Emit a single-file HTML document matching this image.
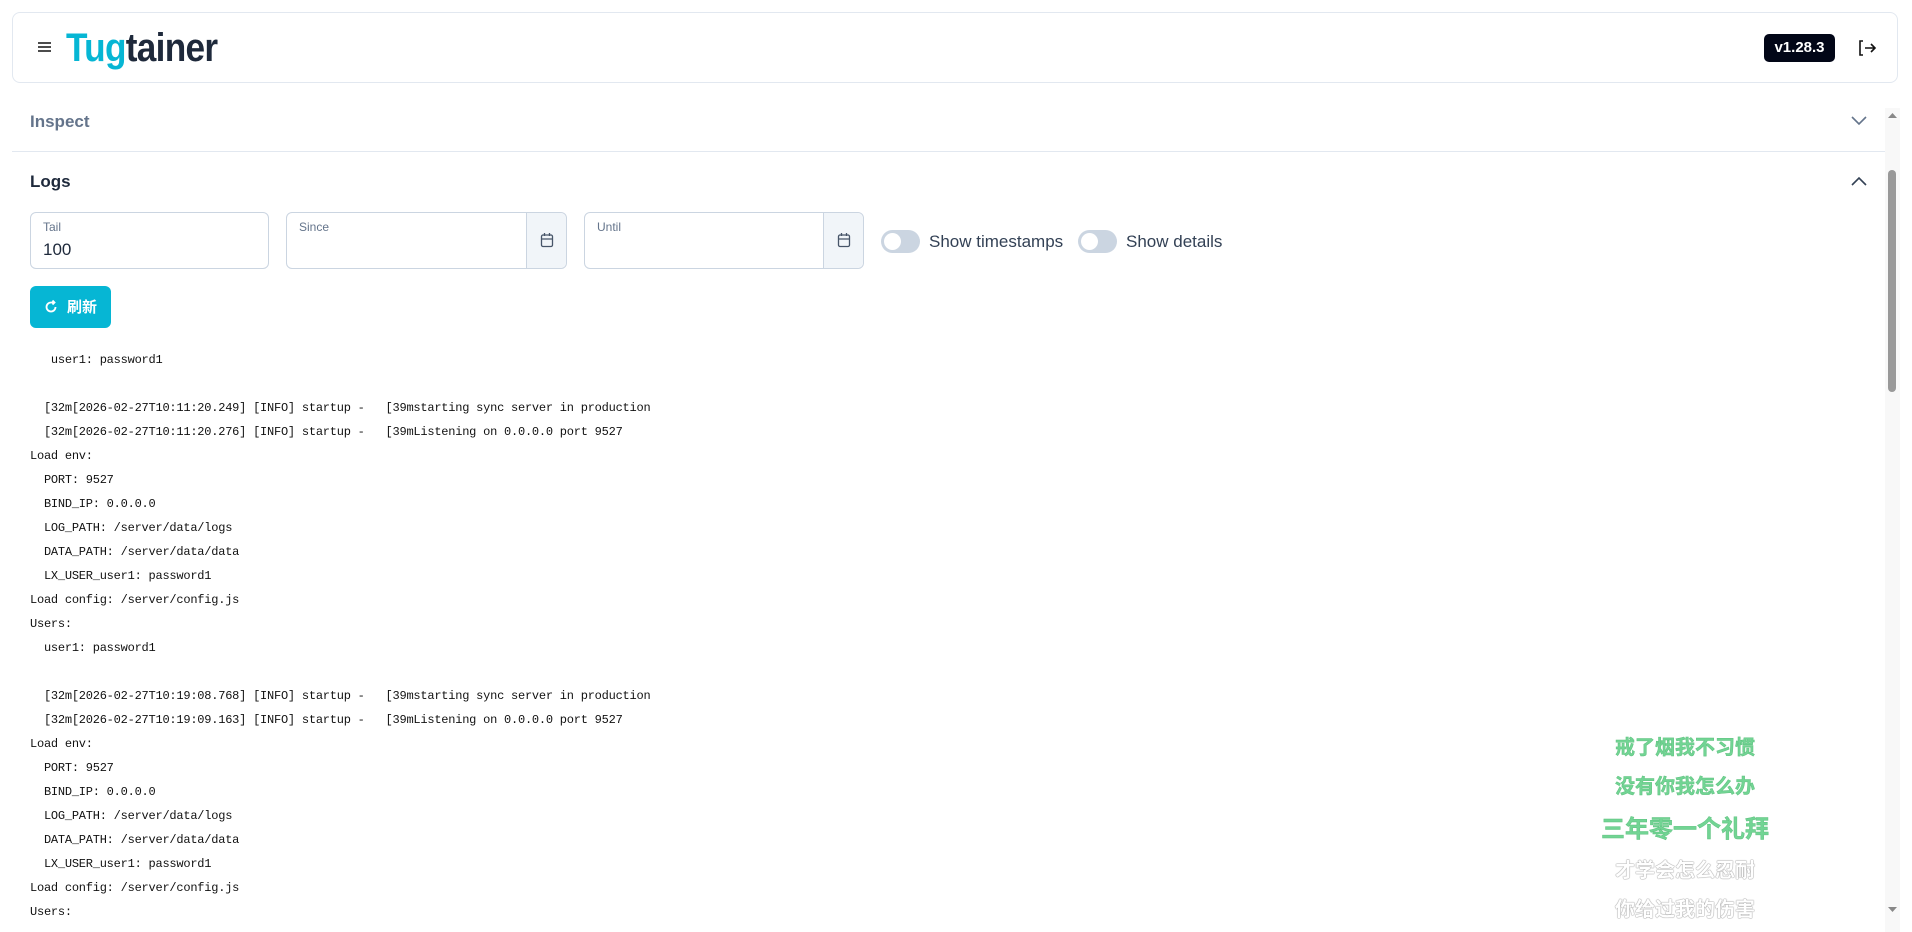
<!DOCTYPE html>
<html><head><meta charset="utf-8"><style>
*{box-sizing:border-box;margin:0;padding:0}
body{width:1912px;height:932px;overflow:hidden;background:#fff;font-family:"Liberation Sans","Noto Sans CJK SC",sans-serif;color:#1e293b;position:relative}
.a{position:absolute}
.hdr{left:12px;top:12px;width:1886px;height:71px;border:1px solid #e2e8f0;border-radius:8px;background:#fff}
.logo{left:66px;top:24px;font-size:40px;font-weight:bold;letter-spacing:-0.8px;color:#1e293b;line-height:48px;transform:scaleX(0.88);transform-origin:0 0}
.logo span{color:#06b6d4}
.badge{left:1764px;top:34px;width:71px;height:28px;background:#020617;color:#fff;border-radius:5px;font-weight:bold;font-size:15px;text-align:center;line-height:28px}
.sec{font-size:17px;font-weight:bold;left:30px}
.inp{border:1px solid #cbd5e1;border-radius:6px;background:#fff;height:57px;top:212px}
.lbl{font-size:12px;color:#64748b;position:absolute;left:12px;top:7px}
.addon{position:absolute;right:0;top:0;width:40px;height:55px;background:#f1f5f9;border-left:1px solid #cbd5e1;border-radius:0 6px 6px 0}
.addon svg{position:absolute;left:13px;top:19px}
.tg{width:39px;height:23px;border-radius:12px;background:#cbd5e1;top:230px}
.tg:after{content:"";position:absolute;left:3px;top:3px;width:17px;height:17px;border-radius:50%;background:#fff}
.tl{top:230px;font-size:17px;color:#334155;line-height:23px}
.log{left:30px;top:348px;font-family:"Liberation Mono",monospace;font-size:12px;letter-spacing:-0.23px;line-height:24px;white-space:pre;color:#111}
.ly{width:300px;left:1535px;text-align:center;font-weight:bold;font-family:"Noto Sans CJK SC",sans-serif}
.g{color:#72d494;-webkit-text-stroke:0.5px #5fc27f;text-shadow:0 0 2px #fff}
.w{color:#fff;font-weight:bold;text-shadow:0 0 1px #999,0 0 1px #999,0 0 1px #aaa}
</style></head><body>
<div class="a hdr"></div>
<svg class="a" style="left:37px;top:40px" width="15" height="14" viewBox="0 0 15 14"><path d="M1 3h13M1 7h13M1 11h13" stroke="#111" stroke-width="1.6"/></svg>
<div class="a logo"><span>Tug</span>tainer</div>
<div class="a badge">v1.28.3</div>
<svg class="a" style="left:1857px;top:39px" width="20" height="18" viewBox="0 0 20 18"><path d="M6 2H3v14h3M8 9h10M14 5l4 4-4 4" stroke="#111" stroke-width="1.6" fill="none"/></svg>
<div class="a sec" style="top:112px;color:#64748b">Inspect</div>
<svg class="a" style="left:1851px;top:116px" width="16" height="10" viewBox="0 0 16 10"><path d="M1 1l7 7 7-7" stroke="#64748b" stroke-width="1.6" fill="none"/></svg>
<div class="a" style="left:12px;top:151px;width:1873px;height:1px;background:#e2e8f0"></div>
<div class="a sec" style="top:172px;color:#1e293b">Logs</div>
<svg class="a" style="left:1851px;top:176px" width="16" height="10" viewBox="0 0 16 10"><path d="M1 9l7-7 7 7" stroke="#334155" stroke-width="1.6" fill="none"/></svg>
<div class="a" style="left:1885px;top:108px;width:15px;height:824px;background:#f8f8f8"></div>
<div class="a" style="left:1888px;top:170px;width:8px;height:222px;background:#999;border-radius:4px"></div>
<svg class="a" style="left:1888px;top:112px" width="9" height="7"><path d="M0 6L4.5 1 9 6z" fill="#888"/></svg>
<svg class="a" style="left:1888px;top:906px" width="9" height="7"><path d="M0 1L4.5 6 9 1z" fill="#888"/></svg>

<div class="a inp" style="left:30px;width:239px"><span class="lbl">Tail</span><span style="position:absolute;left:12px;top:27px;font-size:17px">100</span></div>
<div class="a inp" style="left:286px;width:281px"><span class="lbl">Since</span><div class="addon"><svg width="14" height="16" viewBox="0 0 14 16"><rect x="1.5" y="3" width="11" height="11.5" rx="1.5" stroke="#475569" stroke-width="1.3" fill="none"/><path d="M1.5 7h11M4.5 1v3M9.5 1v3" stroke="#475569" stroke-width="1.3"/></svg></div></div>
<div class="a inp" style="left:584px;width:280px"><span class="lbl">Until</span><div class="addon"><svg width="14" height="16" viewBox="0 0 14 16"><rect x="1.5" y="3" width="11" height="11.5" rx="1.5" stroke="#475569" stroke-width="1.3" fill="none"/><path d="M1.5 7h11M4.5 1v3M9.5 1v3" stroke="#475569" stroke-width="1.3"/></svg></div></div>
<div class="a tg" style="left:881px"></div><div class="a tl" style="left:929px">Show timestamps</div>
<div class="a tg" style="left:1078px"></div><div class="a tl" style="left:1126px">Show details</div>

<div class="a" style="left:30px;top:286px;width:81px;height:42px;background:#06b6d4;border-radius:6px;color:#fff;font-weight:bold;font-size:15px;line-height:42px;padding-left:37px;font-family:'Noto Sans CJK SC',sans-serif;white-space:nowrap">刷新</div>
<svg class="a" style="left:43px;top:299px" width="16" height="16" viewBox="0 0 16 16"><path d="M12.5 8A4.5 4.5 0 1 1 8 3.5h3M9.5 1.5l2 2-2 2" stroke="#fff" stroke-width="1.8" fill="none"/></svg>

<div class="a log">   user1: password1

  [32m[2026-02-27T10:11:20.249] [INFO] startup -   [39mstarting sync server in production
  [32m[2026-02-27T10:11:20.276] [INFO] startup -   [39mListening on 0.0.0.0 port 9527
Load env:
  PORT: 9527
  BIND_IP: 0.0.0.0
  LOG_PATH: /server/data/logs
  DATA_PATH: /server/data/data
  LX_USER_user1: password1
Load config: /server/config.js
Users:
  user1: password1

  [32m[2026-02-27T10:19:08.768] [INFO] startup -   [39mstarting sync server in production
  [32m[2026-02-27T10:19:09.163] [INFO] startup -   [39mListening on 0.0.0.0 port 9527
Load env:
  PORT: 9527
  BIND_IP: 0.0.0.0
  LOG_PATH: /server/data/logs
  DATA_PATH: /server/data/data
  LX_USER_user1: password1
Load config: /server/config.js
Users:</div>

<div class="a ly g" style="top:731px;font-size:20px">戒了烟我不习惯</div>
<div class="a ly g" style="top:770px;font-size:20px">没有你我怎么办</div>
<div class="a ly g" style="top:809px;font-size:24px">三年零一个礼拜</div>
<div class="a ly w" style="top:854px;font-size:20px">才学会怎么忍耐</div>
<div class="a ly w" style="top:893px;font-size:20px">你给过我的伤害</div>
</body></html>
